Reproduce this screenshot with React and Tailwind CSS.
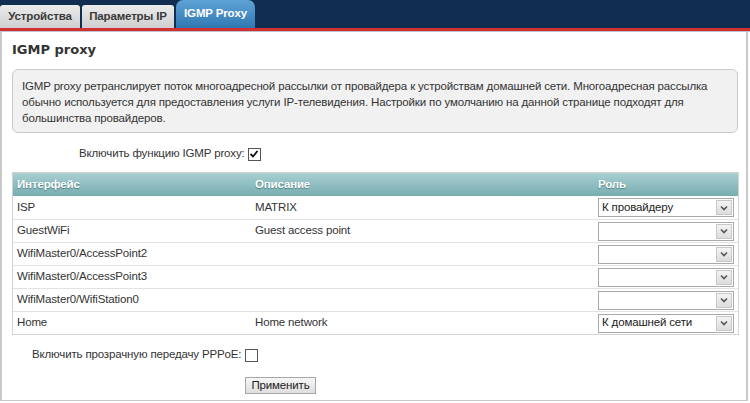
import { useState } from "react";

const rows = [
  { name: "ISP", desc: "MATRIX", role: "К провайдеру" },
  { name: "GuestWiFi", desc: "Guest access point", role: "" },
  { name: "WifiMaster0/AccessPoint2", desc: "", role: "" },
  { name: "WifiMaster0/AccessPoint3", desc: "", role: "" },
  { name: "WifiMaster0/WifiStation0", desc: "", role: "" },
  { name: "Home", desc: "Home network", role: "К домашней сети" },
];

function Select({ value }) {
  return (
    <div className="flex h-[19px] w-[136px] items-center border border-[#a9a9a9] bg-white">
      <span className="flex-1 truncate pl-[3px] leading-none text-[#222]">{value}</span>
      <span className="m-[1px] flex h-[15px] w-[16px] items-center justify-center border border-[#c8c8c8] bg-gradient-to-b from-[#f4f4f4] to-[#dcdcdc]">
        <svg width="8" height="6" viewBox="0 0 8 6">
          <path d="M1 1.5 L4 4.5 L7 1.5" fill="none" stroke="#555" strokeWidth="1.6" />
        </svg>
      </span>
    </div>
  );
}

function Checkbox({ checked, onChange }) {
  return (
    <span
      onClick={onChange}
      className="flex h-[13px] w-[13px] shrink-0 cursor-pointer items-center justify-center border border-[#555] bg-white"
    >
      {checked && (
        <svg width="10" height="10" viewBox="0 0 10 10">
          <path d="M1.5 5 L4 7.5 L8.5 2" fill="none" stroke="#111" strokeWidth="1.8" />
        </svg>
      )}
    </span>
  );
}

export default function App() {
  const [igmp, setIgmp] = useState(true);
  const [pppoe, setPppoe] = useState(false);

  return (
    <div className="h-[403px] w-[750px] overflow-hidden bg-white font-['Liberation_Sans',Arial,sans-serif] text-[11.5px] tracking-[-0.15px] text-[#333]">
      {/* Tabs */}
      <div className="flex h-[28px] items-end gap-[2px] bg-[#112d50]">
        <div className="flex h-[23px] w-[80px] items-center justify-center rounded-t-[3px] bg-gradient-to-b from-[#ececec] to-[#cfcfcf] font-bold text-[#3a3a3a]">
          Устройства
        </div>
        <div className="flex h-[23px] w-[92px] items-center justify-center rounded-t-[3px] bg-gradient-to-b from-[#ececec] to-[#cfcfcf] font-bold text-[#3a3a3a]">
          Параметры IP
        </div>
        <div className="flex h-[28px] w-[79px] items-center justify-center rounded-t-[7px] bg-gradient-to-b from-[#5fa3d6] to-[#2f78b2] font-bold text-white">
          IGMP Proxy
        </div>
      </div>
      <div className="h-[3px] bg-[#d33131]" />
      <div className="h-[1px] bg-[#b9c4cf]" />

      {/* Panel */}
      <div className="h-[369px] w-[748px] border-x-2 border-b border-[#c8c8c8] bg-white pl-[10px] pr-[6px]">
        <h1 className="pt-[9px] font-['DejaVu_Sans',Verdana,sans-serif] text-[13px] font-bold leading-[18px] tracking-normal text-[#333]">
          IGMP proxy
        </h1>

        <div className="mt-[10px] mr-[2px] rounded-[6px] border border-[#c9c9c9] bg-[#f1f1f1] px-[9px] pb-[6px] pt-[8px] leading-[16px] text-[#333]">
          IGMP proxy ретранслирует поток многоадресной рассылки от провайдера к устройствам домашней сети. Многоадресная рассылка
          обычно используется для предоставления услуги IP-телевидения. Настройки по умолчанию на данной странице подходят для
          большинства провайдеров.
        </div>

        <div className="mt-[13px] flex h-[16px] items-center gap-[3px] pl-[67px]">
          <span>Включить функцию IGMP proxy:</span>
          <Checkbox checked={igmp} onChange={() => setIgmp(!igmp)} />
        </div>

        {/* Table */}
        <div className="mt-[10px] mr-[1px] border border-[#d3d3d3]">
          <div className="flex h-[23px] items-center bg-gradient-to-b from-[#a8cfd2] to-[#78adb0] font-bold text-white [text-shadow:0_1px_1px_#4f7f82]">
            <div className="w-[242px] pl-[4px]">Интерфейс</div>
            <div className="w-[343px]">Описание</div>
            <div className="flex-1">Роль</div>
          </div>
          {rows.map((r, i) => (
            <div
              key={r.name}
              className={`flex h-[23px] items-center ${i > 0 ? "border-t border-[#e2e2e2]" : ""}`}
            >
              <div className="w-[242px] pl-[4px]">{r.name}</div>
              <div className="w-[343px]">{r.desc}</div>
              <Select value={r.role} />
            </div>
          ))}
        </div>

        <div className="mt-[12px] flex h-[16px] items-center gap-[4px] pl-[20px]">
          <span>Включить прозрачную передачу PPPoE:</span>
          <Checkbox checked={pppoe} onChange={() => setPppoe(!pppoe)} />
        </div>

        <div className="mt-[14px] pl-[233px]">
          <button className="flex h-[17px] w-[71px] items-center justify-center border border-[#a7a7a7] bg-gradient-to-b from-[#f6f6f6] to-[#dedede] leading-none text-[#222]">
            Применить
          </button>
        </div>
      </div>
    </div>
  );
}
